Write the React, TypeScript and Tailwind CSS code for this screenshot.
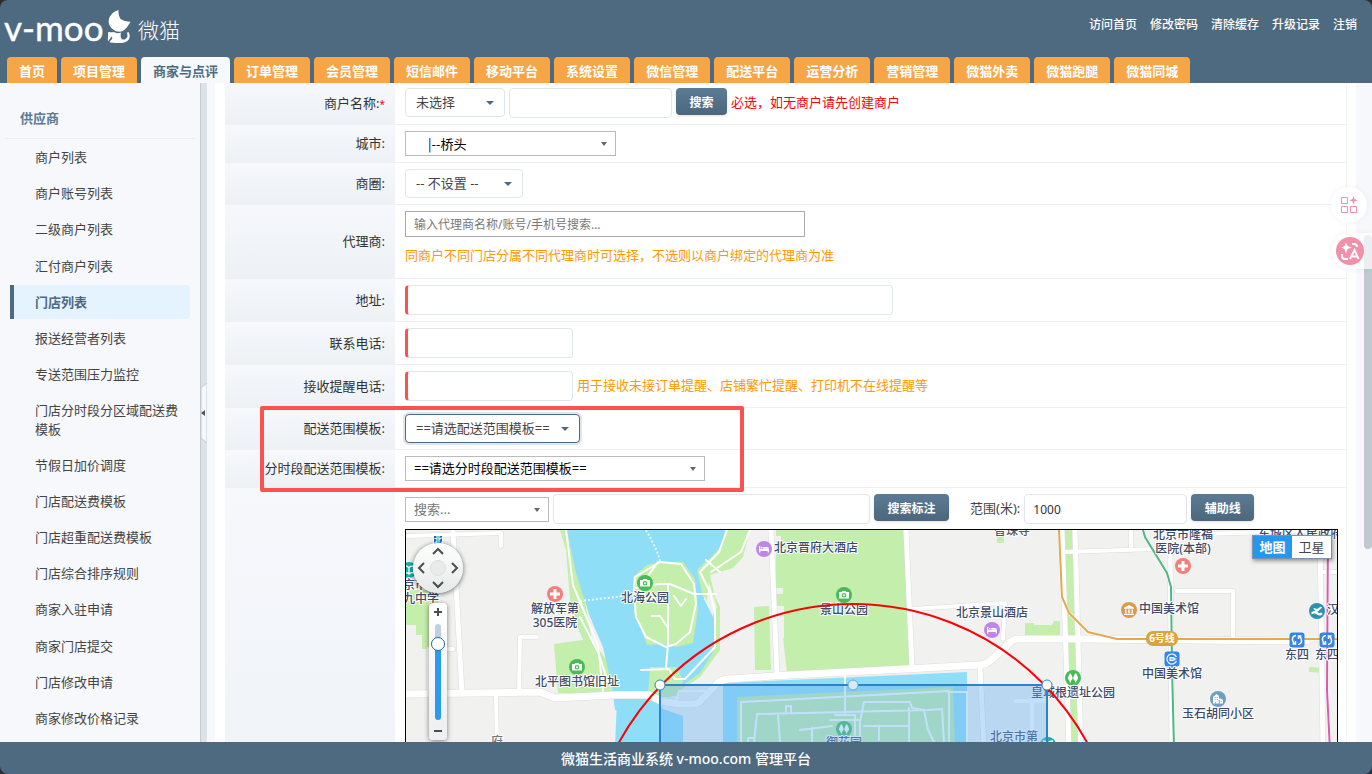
import { ReactNode, useState } from "react";

const TABS = [
    "首页", "项目管理", "商家与点评", "订单管理", "会员管理", "短信邮件", "移动平台", "系统设置",
    "微信管理", "配送平台", "运营分析", "营销管理", "微猫外卖", "微猫跑腿", "微猫同城",
];

const TOP_LINKS = ["访问首页", "修改密码", "清除缓存", "升级记录", "注销"];

const MENU = [
    "商户列表", "商户账号列表", "二级商户列表", "汇付商户列表", "门店列表", "报送经营者列表",
    "专送范围压力监控", "门店分时段分区域配送费模板", "节假日加价调度", "门店配送费模板",
    "门店超重配送费模板", "门店综合排序规则", "商家入驻申请", "商家门店提交", "门店修改申请", "商家修改价格记录",
];

const inputClass = "h-[30px] rounded-[4px] border border-[#e0e5ea] bg-white px-2 text-[12px] text-[#333] outline-none";
const requiredClass = inputClass + " border-l-[3px] border-l-[#fb5151]";
const buttonClass = "h-[27px] rounded-[4px] bg-linear-to-b from-[#5b7b95] to-[#4c677d] pt-[2px] text-[12px] font-bold text-white shadow-sm";

function Logo() {
    return (
        <svg width="182" height="46" viewBox="0 0 182 46" fill="#fff" role="img" aria-label="V-moo 微猫">
            <text x="4" y="39" fontSize="35" fontFamily="Lato, sans-serif" stroke="#fff" strokeWidth=".4">v-moo</text>
            <path d="M118.500 8c-.2 3.500.5 6.500 2 9 2.500 1.800 5.800 2.300 10 2.800-2 3.500-4 6.600-7 8.700-3 1.800-7 1.500-9.700-.5-4-3-5.800-6.500-5-10.500.8-4 4.700-8 9.700-9.500z" />
            <path d="M108 30.500c1.500-1.300 3.200.4 5.500-.4 2.400 1.200 5 1.400 7.500.5-.4 2-.8 4.400.8 6.600 2.200 1 4.300-.2 5.300-2 .7-1.500.4-3-.3-4.500l1.700-.7c1.500 2.500 1.800 5.300.3 7.500-1.600 2.300-4.400 3.500-7.800 3.500-4 0-7.500.3-11-.4-1-1 1-2 2-3.600.5-1 .4-2-.3-2.600-1.200 1.700-2.700 3.600-3.700 5-.6-1.600.5-5.500 0-8.900z" />
            <text x="138" y="36" fontSize="21" fontWeight="300" fontFamily="'Noto Sans CJK SC', sans-serif">微猫</text>
        </svg>
    );
}

type SelectProps = {
    id: string;
    label?: string;
    text: string;
    width: string;
    variant?: "soft" | "square";
    className?: string;
};

function Select({ id, label, text, width, variant = "soft", className = "" }: SelectProps) {
    const soft = variant === "soft";
    return (
        <span className={`inline-grid items-center ${width}`}>
            <select
                id={id}
                aria-label={label}
                className={`col-start-1 row-start-1 w-full appearance-none border bg-white text-[13px] outline-none ${soft ? "h-[29px] rounded-[4px] pl-2.5" : "h-[25px] pl-2"} ${className}`}
            >
                <option>{text}</option>
            </select>
            <svg
                width={soft ? 8 : 6}
                height={4}
                viewBox="0 0 8 4"
                preserveAspectRatio="none"
                fill={soft ? "#4e6a80" : "#666"}
                className={`pointer-events-none col-start-1 row-start-1 justify-self-end ${soft ? "mr-[11px]" : "mr-[9px]"}`}
            >
                <path d="M0 0h8L4 4z" />
            </svg>
        </span>
    );
}

function Row({ label, htmlFor, required, first, children }: { label: string; htmlFor?: string; required?: boolean; first?: boolean; children: ReactNode }) {
    return (
        <div className="flex">
            <div className="flex w-[170px] shrink-0 items-center justify-end bg-linear-to-b from-[#f6f8fc] to-[#edf1f4] pr-2.5 text-[13px] whitespace-nowrap text-[#333]">
                <label htmlFor={htmlFor}>{label}</label>
                {required && <span className="text-[10px] text-red-600">*</span>}
            </div>
            <div className={`min-w-0 flex-1 border-b border-[#eef0f2] pb-1.5 pl-2.5 ${first ? "pt-[5px]" : "pt-1.5"}`}>{children}</div>
        </div>
    );
}

const GLYPHS: Record<string, ReactNode> = {
    hospital: <path d="M-1.500-5h3v3.500h3.500v3h-3.500v3.500h-3v-3.500h-3.500v-3h3.500z" fill="#fff" />,
    camera: (
        <>
            <path d="M-5-3h2.500l1-1h3l1 1H5v6.500H-5z" fill="#fff" />
            <circle r="1.700" cy=".3" fill="#fff" stroke="#47bb55" strokeWidth="1.200" />
        </>
    ),
    bed: <path d="M-5-3h1.300v3H5v3.500H3.700V2h-7.400v1.500H-5zM-3-2h1.500v1.500H-3zM-.8-2H3q2 .2 2 1.700H-.8z" fill="#fff" />,
    tree: <path d="M-2.700-5q4.200 5 .6 8v1.500h-1.200V3q-3.700-3 .6-8zM2.700-5q4.200 5 .6 8v1.500H2.100V3q-3.700-3 .6-8z" fill="#fff" />,
    museum: <path d="M0-5l5 2.700v1H-5v-1zM-4-.6h1.500v3.800H-4zM-.8-.6H.8v3.800H-.8zM2.500-.6H4v3.800H2.500zM-5 3.700H5V5H-5z" fill="#fff" />,
    estate: (
        <>
            <path d="M-5 4.500V-2l3.500-3L1-3v2.500h1.500L5 1v3.500z" fill="#fff" />
            <path d="M-3.500-1.500h1M-1.300-1.500h1M-3.500 .7h1M-1.300 .7h1M1.200 1v3.500M3 1.800v1M-2.300 4.500V3" stroke="#719fbe" />
        </>
    ),
    pool: <path d="M-5.500 3.500q2.700-2 5.500 0t5.500 0l-.5-2q-2.500 1-5-.5l2-1.500L5-3.500 4-4.500 0-2l-3-1-.5 1 2 1.500-4 1.500z" fill="#fff" />,
    school: <path d="M-4.500-4q3 0 4.500 1.500Q1.500-4 4.500-4v6.500Q1.500 2.500 0 4q-1.500-1.500-4.500-1.500zM0-2.500V4" fill="none" stroke="#fff" strokeWidth="1.300" />,
};

const POINTS = [
    { x: 555, y: 594, color: "#f37e7b", glyph: "hospital" },
    { x: 1183, y: 566, color: "#f37e7b", glyph: "hospital" },
    { x: 645, y: 583, color: "#47bb55", glyph: "camera" },
    { x: 577, y: 667, color: "#47bb55", glyph: "camera" },
    { x: 844, y: 595, color: "#47bb55", glyph: "camera" },
    { x: 764, y: 549, color: "#bf86ea", glyph: "bed" },
    { x: 992, y: 630, color: "#bf86ea", glyph: "bed" },
    { x: 844, y: 729, color: "#47bb55", glyph: "tree" },
    { x: 1073, y: 678, color: "#47bb55", glyph: "tree" },
    { x: 1129, y: 610, color: "#db9a4c", glyph: "museum" },
    { x: 1218, y: 699, color: "#719fbe", glyph: "estate" },
    { x: 1317, y: 611, color: "#2e90b0", glyph: "pool" },
    { x: 1048, y: 745, color: "#16b1a8", glyph: "school" },
    { x: 409, y: 570, color: "#16b1a8", glyph: "school" },
];

// x is the middle of the label, y its baseline
const LABELS: [number, number, string][] = [
    [555, 613, "解放军第"], [555, 627, "305医院"], [645, 602, "北海公园"], [577, 686, "北平图书馆旧址"],
    [816, 552, "北京晋府大酒店"], [844, 614, "景山公园"], [844, 747, "御花园"], [992, 617, "北京景山酒店"],
    [1183, 539, "北京市隆福"], [1183, 553, "医院(本部)"], [1169, 613, "中国美术馆"],
    [1172, 678, "中国美术馆"], [1073, 697, "皇城根遗址公园"], [1218, 718, "玉石胡同小区"], [1333, 614, "汉"],
    [1297, 659, "东四"], [1327, 659, "东四"], [1300, 538, "东城区人民政府"], [1014, 741, "北京市第"],
    [421, 589, "京市八"], [421, 603, "九中学"],
];

function MapCanvas() {
    return (
        <svg viewBox="406 530 931 400" preserveAspectRatio="xMidYMin slice" className="block h-[400px] w-full bg-[#f1f1f0]" role="img" aria-label="门店地图">
            {/* parks */}
            <g fill="#c3eeab">
                <path d="M406 590h32v59h-16v-14h-6v-10h-10zM560 530h12l20 110 22 30v23h-56l-4-49 29-4-12-30-5-60z" />
                <path d="M722 530h28l-7 27-10 11-23 7 5 22 5 10v43l-20 27-30 20h-22l2-30h27l20-20 20-40-15-45z" />
                <path d="M776 530h128l6 137-123 6-4-36-7-31v-76zM754 607l15-1 2 64h-16zM997 537h7v6h-7zM1025 623h9v2h18l2-4h6v17h-35zM1309 667l16 1v5l-16-1z" />
                <path d="M1064 530h8l6 212h-8z" />
            </g>
            <path d="M776 536h5v5h-5zM776 588h7v6h-7zM776 606h8v32h-5z" fill="#f1f1f0" />
            {/* lakes */}
            <g fill="#8fdef7">
                <path d="M567 530h158l-1 13-24 26 4 30 10 20 1 13-2 20-13 21-20 14-30 0-2 18-5 5h-28l-3-23-9-40-13-30-14-44-6-28z" />
                <path d="M617 701h40l6 8 20 7v30h-68zM723 683l244-11v80H723z" />
            </g>
            <path d="M660 562h23l12 17 3 30-5 34-16 4-13-3-17 1-7-20-6-12-1-36 14-12zM650 667h27l6 14-4 15h-31zM737 697l216-10 2 60H737z" fill="#c3eeab" />
            <path d="M697 570l9-9 4 10-3 30-5-8z" fill="#c3eeab" />
            <path d="M646 530q14 25 14 32M580 601l54-6" stroke="#e8f8fd" strokeWidth="2" strokeDasharray="2 2" fill="none" />
            {/* road casings */}
            <g fill="none" stroke="#dcdcde" strokeLinejoin="round" strokeLinecap="round">
                <path d="M406 694l134-2 15 6 60-3h34l12 6 18 3h12q9 0 11-5l12-12q4-7 14-8l62-4 134-7 54-3q9 0 14-6l16-14q4-6 10-6h65l224 2" strokeWidth="8" />
                <path d="M453 530l9 163M771 530l6 144M906 530l6 137M980 667l4 80M1062 530l7 220M1075 530l6 220M1170 550l2 200M1320 530l3 220" strokeWidth="6" />
                <path d="M496 695l1 50M406 536l95-3v13M519 690l1-53h17M912 609l93-6-2 36M1063 552l92-3M1131 530v20M1177 591h56v48M1200 534l137-4M453 649h-24v40M1323 572h14" strokeWidth="5" />
            </g>
            {/* roads */}
            <g fill="none" stroke="#fff" strokeLinejoin="round" strokeLinecap="round">
                <path d="M406 694l134-2 15 6 60-3h34l12 6 18 3h12q9 0 11-5l12-12q4-7 14-8l62-4 134-7 54-3q9 0 14-6l16-14q4-6 10-6h65l224 2" strokeWidth="7" />
                <path d="M453 530l9 163M771 530l6 144M906 530l6 137M980 667l4 80M1062 530l7 220M1075 530l6 220M1170 550l2 200M1320 530l3 220" strokeWidth="5" />
                <path d="M496 695l1 50M406 536l95-3v13M519 690l1-53h17M912 609l93-6-2 36M1063 552l92-3M1131 530v20M1177 591h56v48M1200 534l137-4M453 649h-24v40M1323 572h14M1016 701h30M1032 701v45" strokeWidth="4" />
                <path d="M566 530l7 55 25 60 5 47M580 617l18 35 10 30M727 530l-8 22-19 20 10 20 5 20v35l-30 32-10 0-6-10-28 1M750 530l-9 22-30 20M635 577l25-15 21 2 13 20 2 20-6 28-14 12-10 3-20-10-10-20-2-25zM636 588l22-4h12l24 10h22M668 584v60l-2 24M674 596l7 10 5-7M652 616h8l8 12M648 576l10-14M706 560l14 12" strokeWidth="2" />
                <path d="M741 742v-40l208-11v50M845 675v38M754 742l3-28 170-4 15-1 2 33M778 714l2 28M786 712v-6h5v6M860 722l4-20h46l2 6 12 2 4 20 6 12M909 708v34M830 720h30v20M835 715h20v20M800 730l32-4M812 728v16M864 726h45M879 726v14M748 742v-4h6M948 692h19v50M675 705l4-14h26" strokeWidth="2" />
            </g>
            {/* metro */}
            <g fill="none" strokeWidth="3" stroke="#fff">
                <path d="M1059 530l3 67 7 16 19 19 29 7h220M1143 530l2 7 22 36 4 14 1 80 2 80M1328 530l-1 160 3 60" />
            </g>
            <g fill="none" strokeWidth="2">
                <path d="M1059 530l3 67 7 16 19 19 29 7h220" stroke="#e5a84f" />
                <path d="M1143 530l2 7 22 36 4 14 1 80 2 80" stroke="#4cb984" />
                <path d="M1328 530l-1 160 3 60" stroke="#d65cad" />
            </g>
            <rect x="1146" y="631" width="32" height="15" rx="7" fill="#dda23a" />
            <text x="1162" y="642" textAnchor="middle" fontSize="10" fontWeight="700" fill="#fff">6号线</text>
            {[[1172, 659], [1297, 640], [1327, 640]].map(([x, y]) => (
                <g key={x} transform={`translate(${x} ${y})`} fill="none" stroke="#fff" strokeWidth="1.500">
                    <rect x="-7.500" y="-7.500" width="15" height="15" rx="3" fill="#3585e8" stroke="none" />
                    {x === 1172 ? (
                        <path d="M4.500-2a5 5 0 1 0 0 4M-2-1.500h3q1.500 0 1.500 1.500T1 1.500h-3zM-2 0h6.500" strokeWidth="1.200" />
                    ) : (
                        <path d="M-1-4.500q-4 .5-3.500 4.500.3 2.500 2.500 4M-4.500 4h3V1M1 4.500q4-.5 3.500-4.500-.3-2.500-2.500-4M4.500-4h-3v3" />
                    )}
                </g>
            ))}
            {POINTS.map((p) => (
                <g key={`${p.x}-${p.y}`} transform={`translate(${p.x} ${p.y})`}>
                    <circle r="8" fill={p.color} />
                    {GLYPHS[p.glyph]}
                </g>
            ))}
            <g fontSize="12" fontWeight="500" fill="#3c4a68" stroke="#fff" strokeWidth="2" strokeLinejoin="round" paintOrder="stroke" textAnchor="middle">
                {LABELS.map(([x, y, name]) => (
                    <text key={`${x}-${y}`} x={x} y={y}>{name}</text>
                ))}
                <text x="1012" y="535" fill="#555">智珠寺</text>
                <text x="497" y="746" fill="#777">府</text>
            </g>
            {/* delivery range */}
            <circle cx="853" cy="871" r="267" fill="none" stroke="#fb0007" strokeWidth="2" />
            <rect x="660" y="685" width="387" height="387" fill="#6ab2f5" fillOpacity=".4" stroke="#2f82c4" strokeWidth="2" />
            <g stroke="#2f82c4" fill="#fff">
                <circle cx="660" cy="685" r="5" />
                <circle cx="1047" cy="685" r="5" />
                <circle cx="853" cy="685" r="5" fill="#d5eafb" stroke="#6aa9dc" />
            </g>
        </svg>
    );
}

function PanControl() {
    return (
        <div className="absolute top-[5px] left-[7px] flex flex-col-reverse items-center">
            <div className="-mt-[2px] size-[50px] rounded-full bg-linear-to-b from-white to-[#e6e9e9] shadow-[0_1px_5px_rgba(0,0,0,0.6)]">
                <svg width="50" height="50" viewBox="0 0 50 50" role="img" aria-label="平移地图">
                    <circle cx="25" cy="25" r="7.500" fill="#e9ebeb" stroke="#dcdfdf" />
                    <path d="M20 11l5-5 5 5M20 39l5 5 5-5M11 20l-5 5 5 5M39 20l5 5-5 5" fill="none" stroke="#4a4d4f" strokeWidth="2" />
                </svg>
            </div>
            <div className="flex h-[10px] w-[10px] items-center justify-center border border-white bg-[#1c66a8] text-[8px] leading-none font-bold text-white">北</div>
        </div>
    );
}

export default function App() {
    const [activeTab, setActiveTab] = useState("商家与点评");
    const [activeMenu, setActiveMenu] = useState("门店列表");
    const [mapType, setMapType] = useState("地图");

    return (
        <div className="h-screen bg-[#2e2e2e] font-['Noto_Sans','Noto_Sans_CJK_SC',sans-serif]">
            <div className="relative flex h-full flex-col overflow-hidden rounded-lg bg-[#4e6a80]">
                <header className="flex h-[83px] shrink-0 flex-col justify-between">
                    <div className="flex h-[50px] items-center justify-between pr-[15px]">
                        <Logo />
                        <nav className="flex gap-[13px] text-[12px] font-medium text-white">
                            {TOP_LINKS.map((t) => (
                                <a key={t} href="#">{t}</a>
                            ))}
                        </nav>
                    </div>
                    <nav className="flex gap-1 pl-[7px]">
                        {TABS.map((t) => (
                            <button
                                key={t}
                                onClick={() => setActiveTab(t)}
                                className={`h-[26px] shrink-0 rounded-t-[4px] px-3 pt-[2px] text-[13px] leading-5 font-bold ${t === activeTab ? "bg-[#f6f8fc] text-[#4e6a80]" : "bg-[#f8a545] text-white"}`}
                            >
                                {t}
                            </button>
                        ))}
                    </nav>
                </header>

                <div className="flex min-h-0 flex-1 bg-[#f6f8fc]">
                    <aside className="w-[200px] shrink-0 overflow-hidden">
                        <h2 className="mx-[5px] h-14 border-b border-[#eceef1] pt-[26px] pl-[15px] text-[13px] leading-[18px] font-bold text-[#5a7a92]">供应商</h2>
                        <ul className="mt-px px-2.5 text-[13px] leading-[1.4] text-[#444]">
                            {MENU.map((m) => (
                                <li key={m} className="mb-[2px]">
                                    <a
                                        href="#"
                                        onClick={() => setActiveMenu(m)}
                                        className={`block rounded-r-[4px] border-l-4 py-2 pr-2 pl-[21px] ${m === activeMenu ? "border-[#4e6a80] bg-[#e5f3ff] font-bold text-[#4e6a80]" : "border-transparent"}`}
                                    >
                                        {m}
                                    </a>
                                </li>
                            ))}
                        </ul>
                    </aside>

                    <div className="flex w-[7px] shrink-0 items-center border-l border-[#c2cbd2] bg-[#dde2e8]">
                        <button aria-label="收起菜单" className="block">
                            <svg width="6" height="60" viewBox="0 0 6 60">
                                <path d="M6 0L0 5v50l6 5z" fill="#f6f8fc" stroke="#c2cbd2" />
                                <path d="M4 27v6l-4-3z" fill="#555" />
                            </svg>
                        </button>
                    </div>

                    <main className="mr-4 ml-2 min-w-0 flex-1 overflow-hidden bg-white pr-[9px] pl-2.5">
                        <form className="border-r border-[#f4f5f7]" onSubmit={(e) => e.preventDefault()}>
                            <Row label="商户名称:" htmlFor="merchant" required first>
                                <div className="flex items-start gap-1">
                                    <Select id="merchant" text="未选择" width="w-[100px]" className="border-[#e0e5ea] text-[#444]" />
                                    <input aria-label="商户关键字" className={`${inputClass} w-[163px]`} />
                                    <button className={`${buttonClass} w-[51px]`}>搜索</button>
                                    <span className="text-[13px] leading-[28px] text-[#fb0007]">必选，如无商户请先创建商户</span>
                                </div>
                            </Row>
                            <Row label="城市:" htmlFor="city">
                                <div className="flex">
                                    <Select id="city" text="|--桥头" width="w-[211px]" variant="square" className="border-[#bbb] indent-[14px] font-['Noto_Sans_CJK_SC',sans-serif] text-black" />
                                </div>
                            </Row>
                            <Row label="商圈:" htmlFor="area">
                                <div className="flex">
                                    <Select id="area" text="-- 不设置 --" width="w-[118px]" className="border-[#e0e5ea] text-[#444]" />
                                </div>
                            </Row>
                            <Row label="代理商:" htmlFor="agent">
                                <input id="agent" placeholder="输入代理商名称/账号/手机号搜索..." className="block h-[26px] w-[400px] border border-[#aaa] px-2 text-[12px] outline-none placeholder:text-[#777]" />
                                <p className="h-[35px] pt-[9px] text-[13px] leading-[18px] text-[#ff9900]">同商户不同门店分属不同代理商时可选择，不选则以商户绑定的代理商为准</p>
                            </Row>
                            <Row label="地址:" htmlFor="address">
                                <input id="address" className={`${requiredClass} block w-[488px]`} />
                            </Row>
                            <Row label="联系电话:" htmlFor="phone">
                                <input id="phone" className={`${requiredClass} block w-[168px]`} />
                            </Row>
                            <Row label="接收提醒电话:" htmlFor="notify">
                                <div className="flex gap-1">
                                    <input id="notify" className={`${requiredClass} w-[168px]`} />
                                    <span className="text-[13px] leading-[28px] text-[#ff9900]">用于接收未接订单提醒、店铺繁忙提醒、打印机不在线提醒等</span>
                                </div>
                            </Row>
                            <div className="relative">
                                <Row label="配送范围模板:" htmlFor="range">
                                    <div className="flex">
                                        <Select id="range" text="==请选配送范围模板==" width="w-[175px]" className="border-[#4e6a80] text-[#444] ring-2 ring-[#e0e6ec]" />
                                    </div>
                                </Row>
                                <Row label="分时段配送范围模板:" htmlFor="timeRange">
                                    <div className="flex">
                                        <Select id="timeRange" text="==请选分时段配送范围模板==" width="w-[300px]" variant="square" className="border-[#bbb] text-black" />
                                    </div>
                                </Row>
                                <div className="pointer-events-none absolute -top-[2px] -bottom-1 left-[35px] w-[484px] rounded-[2px] border-4 border-[#fb5151]" />
                            </div>
                            <div className="flex">
                                <div className="w-[170px] shrink-0 bg-linear-to-b from-[#f6f8fc] to-[#edf1f4]" />
                                <div className="min-w-0 flex-1 pt-1.5 pr-2 pl-2.5">
                                    <div className="flex h-[35px] items-start gap-1">
                                        <div className="pt-[3px] leading-none">
                                            <Select id="place" label="搜索地点" text="搜索..." width="w-[144px]" variant="square" className="border-[#bbb] text-[#777]" />
                                        </div>
                                        <input aria-label="标注关键字" className={`${inputClass} w-[317px]`} />
                                        <button className={`${buttonClass} w-[75px]`}>搜索标注</button>
                                        <label htmlFor="radius" className="ml-[17px] text-[13px] leading-[28px] text-[#444]">范围(米):</label>
                                        <input id="radius" defaultValue="1000" className={`${inputClass} w-[163px]`} />
                                        <button className={`${buttonClass} w-[63px]`}>辅助线</button>
                                    </div>
                                    <div className="relative overflow-hidden border border-black">
                                        <MapCanvas />
                                        <PanControl />
                                        <div className="absolute top-[73px] left-[23px] flex h-[137px] w-[18px] flex-col items-center justify-between rounded-[4px] bg-linear-to-b from-white to-[#eeeff0] py-1 shadow-[0_1px_5px_rgba(0,0,0,0.5)]">
                                            <button aria-label="放大">
                                                <svg width="10" height="10" viewBox="0 0 10 10" stroke="#4a4d4f" strokeWidth="2" className="block">
                                                    <path d="M1 5h8M5 1v8" />
                                                </svg>
                                            </button>
                                            <input
                                                type="range"
                                                aria-label="缩放级别"
                                                defaultValue={16}
                                                className="h-[96px] w-[14px] appearance-none bg-transparent [writing-mode:vertical-lr] [&::-webkit-slider-runnable-track]:mx-auto [&::-webkit-slider-runnable-track]:w-[6px] [&::-webkit-slider-runnable-track]:rounded-full [&::-webkit-slider-runnable-track]:bg-linear-to-b [&::-webkit-slider-runnable-track]:from-[#c3cfdf] [&::-webkit-slider-runnable-track]:from-20% [&::-webkit-slider-runnable-track]:to-[#2b9bee] [&::-webkit-slider-runnable-track]:to-20% [&::-webkit-slider-thumb]:-ml-1 [&::-webkit-slider-thumb]:size-[14px] [&::-webkit-slider-thumb]:appearance-none [&::-webkit-slider-thumb]:rounded-full [&::-webkit-slider-thumb]:border [&::-webkit-slider-thumb]:border-[#1c66a8] [&::-webkit-slider-thumb]:bg-white"
                                            />
                                            <button aria-label="缩小">
                                                <svg width="10" height="10" viewBox="0 0 10 10" stroke="#4a4d4f" strokeWidth="2" className="block">
                                                    <path d="M1 5h8" />
                                                </svg>
                                            </button>
                                        </div>
                                        <div className="absolute top-[5px] right-[5px] flex h-6 border border-[#7e93ab] text-[13px] shadow-[1px_2px_4px_rgba(0,0,0,0.4)]">
                                            {["地图", "卫星"].map((t) => (
                                                <button
                                                    key={t}
                                                    type="button"
                                                    onClick={() => setMapType(t)}
                                                    className={`w-[39px] leading-[20px] ${t === mapType ? "bg-[#2597ec] font-bold text-white" : "bg-white text-[#444]"}`}
                                                >
                                                    {t}
                                                </button>
                                            ))}
                                        </div>
                                    </div>
                                </div>
                            </div>
                        </form>
                    </main>
                </div>

                <footer className="flex h-8 shrink-0 items-center justify-center text-[14px] font-medium text-white">
                    微猫生活商业系统 v-moo.com 管理平台
                </footer>

                {/* scroll thumb and the floating assistant buttons */}
                <div className="absolute top-[235px] right-0 h-[314px] w-2 rounded-full bg-[#c0c8d0]" />
                <button aria-label="应用" className="absolute top-[187px] right-[5px] flex size-9 items-center justify-center rounded-full bg-white shadow-[0_0_6px_rgba(0,0,0,0.06)]">
                    <svg width="18" height="18" viewBox="0 0 18 18" fill="none" stroke="#f28fa9">
                        <path d="M1.500 1.500h6v6h-6zM1.500 10.500h6v6h-6zM10.500 10.500h6v6h-6z" />
                        <path d="M13.500 0l1 3 3 1.500-3 1-1 3-1-3-3-1 3-1.500z" fill="#f28fa9" stroke="none" />
                    </svg>
                </button>
                <button aria-label="翻译" className="absolute top-[233px] right-0 flex h-9 w-10 items-center rounded-l-full bg-white/70 pl-1 shadow-[0_0_6px_rgba(0,0,0,0.06)]">
                    <svg width="28" height="28" viewBox="0 0 28 28" fill="none" stroke="#fff" strokeWidth="2">
                        <circle cx="14" cy="14" r="14" fill="#f28fa9" stroke="none" />
                        <path d="M10 5l1.500 4 4.500 1.500-4.500 1.500-1.500 4.500L8.500 12 5 10.500 8.500 9z" fill="#fff" stroke="none" />
                        <path d="M16 7h2q3 0 3 3M6 17v2q0 3 3 3h3M14 22l4.500-9 4 9M15.500 19.500h6" />
                    </svg>
                </button>
            </div>
        </div>
    );
}
